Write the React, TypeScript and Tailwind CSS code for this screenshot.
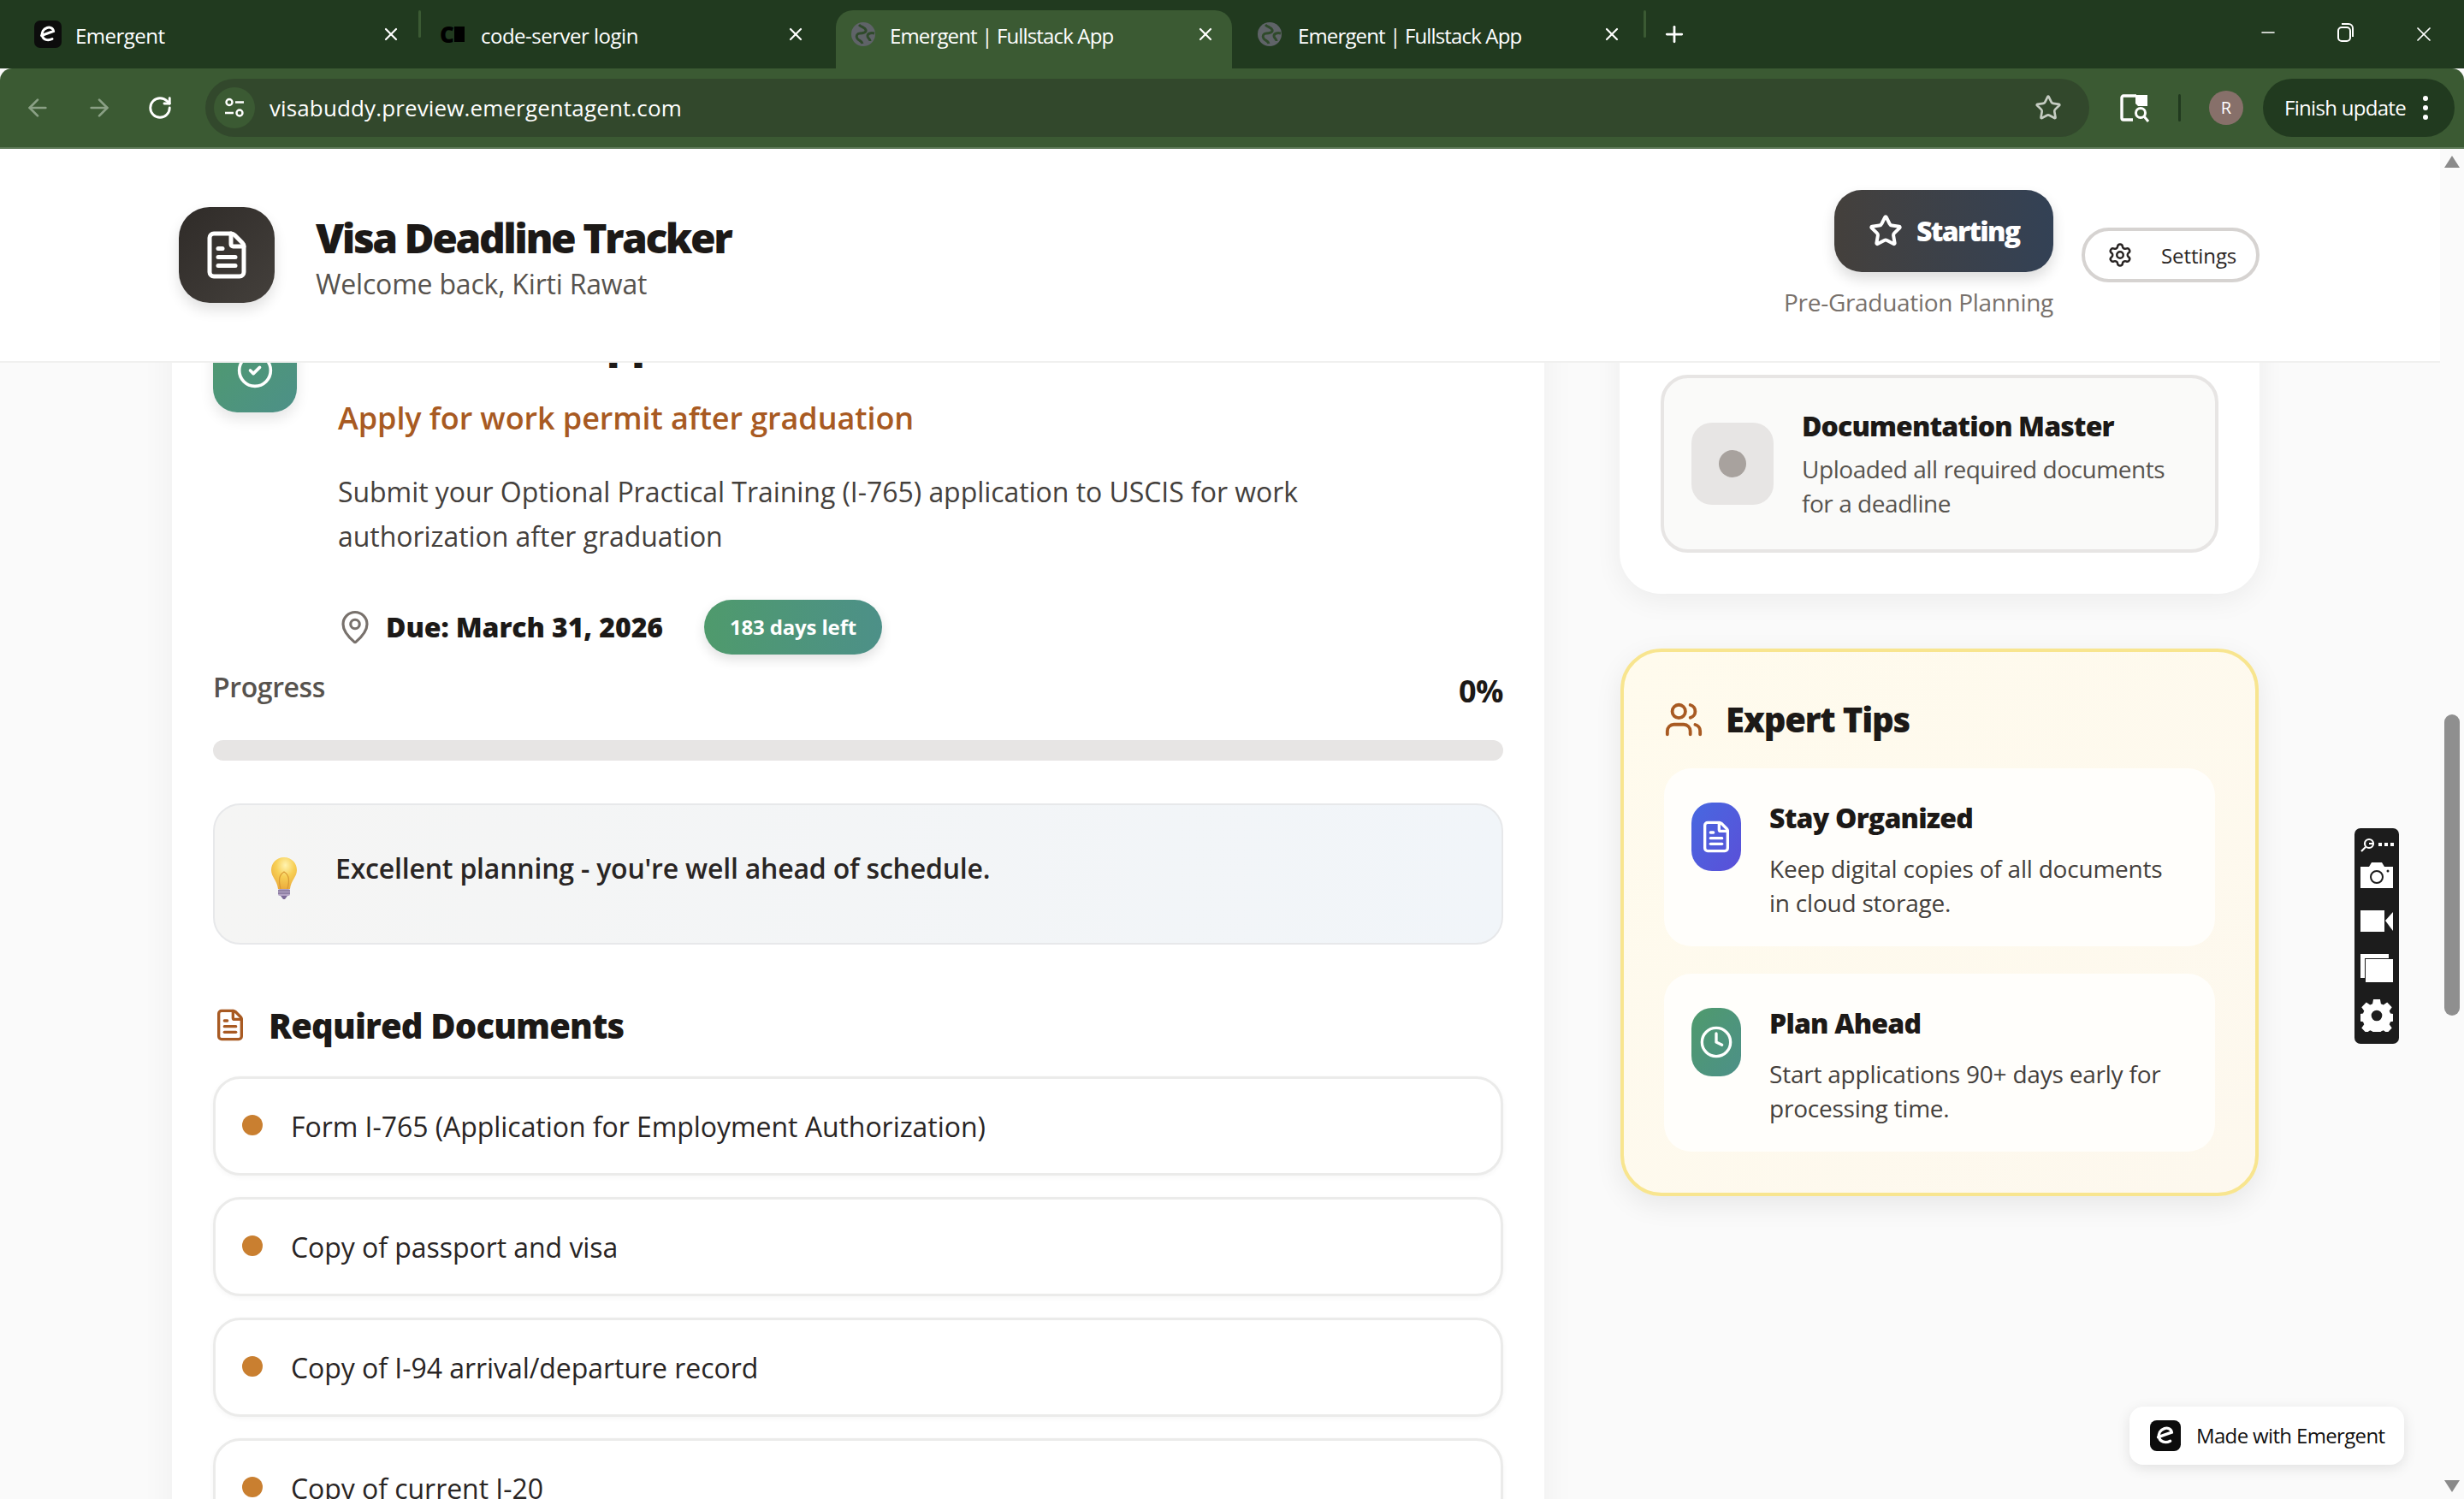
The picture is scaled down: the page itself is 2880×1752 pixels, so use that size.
import { ArrowLeft, ArrowRight, RotateCw, X, Plus, Minus, Star, Settings, FileText, CircleCheck, MapPin, Users, Clock } from "lucide-react";

const Globe = () => (
  <svg width="28" height="28" viewBox="0 0 28 28" className="shrink-0">
    <circle cx="14" cy="14" r="14" fill="#5f6368" />
    <path d="M9 3c3 3 7 3 8 6s-4 4-7 4-5 3-3 6 5 2 6 6" fill="none" stroke="#2f4a2b" strokeWidth="3" />
    <path d="M27 13c-4-1-8 0-8 3s3 3 3 6" fill="none" stroke="#2f4a2b" strokeWidth="3" />
  </svg>
);

const ELogo = ({ size }: { size: number }) => (
  <svg width={size} height={size} viewBox="0 0 32 32" className="shrink-0">
    <rect width="32" height="32" rx="7" fill="#0c0c0c" />
    <path d="M8.5 17.5 L22.5 12.5 C22 8.5 18 7.5 15 8.5 C10.5 10 8.5 14 9.5 18 C10.5 22.5 16 24 21 21.5" fill="none" stroke="#fff" strokeWidth="3" strokeLinecap="round" />
  </svg>
);

function Tab({ w, icon, title }: { w: string; icon: React.ReactNode; title: string }) {
  return (
    <div className={`${w} h-full flex items-center gap-4 pb-[12px] shrink-0 text-[24px] text-white`}>
      {icon}
      <span className="flex-1 truncate tracking-[-0.5px] leading-[32px] mt-[3px]">{title}</span>
      <X size={24} strokeWidth={2.2} className="shrink-0 text-white" />
    </div>
  );
}

const Sep = ({ c = "ml-[20px] mr-[22px]" }: { c?: string }) => <div className={`w-[3px] h-[32px] rounded bg-[#3b5a33] mb-[12px] shrink-0 ${c}`} />;

function TopBar() {
  return (
    <>
      <div className="h-[80px] bg-[#213a1f] flex items-stretch pt-[12px] pl-[40px] shrink-0">
        <Tab w="w-[429px]" icon={<ELogo size={32} />} title="Emergent" />
        <Sep />
        <Tab w="w-[428px]" icon={
          <div className="w-[32px] h-[32px] flex items-center gap-[1px] shrink-0 text-black font-black text-[26px] leading-none"><span className="tracking-[-1px]">C</span><span className="block w-[12px] h-[18px] bg-black" /></div>
        } title="code-server login" />
        <div className="w-[35px] shrink-0" />
        <div className="w-[463px] h-full bg-[#3b5a33] rounded-t-[20px] flex items-center gap-[17px] pl-[18px] pr-[19px] pb-[12px] text-[24px] text-white shrink-0">
          <Globe />
          <span className="flex-1 truncate tracking-[-0.85px] leading-[32px] mt-[3px]">Emergent | Fullstack App</span>
          <X size={24} strokeWidth={2.2} />
        </div>
        <div className="w-[30px] shrink-0" />
        <div className="w-[426px] h-full flex items-center gap-[19px] pb-[12px] text-[24px] text-white shrink-0">
          <Globe />
          <span className="flex-1 truncate tracking-[-0.85px] leading-[32px] mt-[3px]">Emergent | Fullstack App</span>
          <X size={24} strokeWidth={2.2} />
        </div>
        <Sep c="ml-[25px] mr-[18px]" />
        <div className="h-full flex items-center pb-[12px]"><Plus size={30} strokeWidth={2.2} className="text-white" /></div>
        <div className="ml-auto h-full flex items-start pr-[33px] pt-[14px] text-white">
          <Minus size={24} strokeWidth={1.6} className="mr-[66px]" />
          <svg width="24" height="24" viewBox="0 0 24 24" fill="none" stroke="#fff" strokeWidth="2" className="mr-[66px]">
            <rect x="4" y="6" width="14" height="16" rx="4" /><path d="M8 2h8a5 5 0 0 1 5 5v10" />
          </svg>
          <X size={28} strokeWidth={1.5} />
        </div>
      </div>
      <div className="h-[94px] bg-[#3b5a33] border-b-2 border-[#5e7a58] flex items-center pl-[28px] pr-[11px] rounded-t-[14px] shrink-0 relative">
        <ArrowLeft size={32} strokeWidth={2} className="text-[#8aa085]" />
        <ArrowRight size={32} strokeWidth={2} className="text-[#8aa085] ml-[40px]" />
        <RotateCw size={30} strokeWidth={2.3} className="text-white ml-[40px]" />
        <div className="ml-[38px] w-[2203px] h-[68px] rounded-full bg-[#32482c] flex items-center pl-[10px] pr-[32px]">
          <div className="w-[48px] h-[48px] rounded-full bg-[#3b5a33] flex items-center justify-center shrink-0">
            <svg width="26" height="26" viewBox="0 0 26 26" fill="none" stroke="#fff" strokeWidth="2.4">
              <circle cx="7" cy="6.5" r="3.5" /><path d="M14 6.5h10M2 19h10" /><circle cx="19" cy="19" r="3.5" />
            </svg>
          </div>
          <span className="ml-[17px] text-[26px] text-white tracking-[0.13px]">visabuddy.preview.emergentagent.com</span>
          <Star size={32} strokeWidth={2} className="ml-auto text-[#c5ccc2]" />
        </div>
        <svg width="36" height="36" viewBox="0 0 36 36" fill="none" className="ml-[35px] shrink-0">
          <path d="M20 4H5a2 2 0 0 0-2 2v24a2 2 0 0 0 2 2h11" stroke="#fff" strokeWidth="3.4" />
          <path d="M19 3h14v13H22l-3-3z" fill="#fff" />
          <circle cx="25" cy="24" r="5.5" stroke="#fff" strokeWidth="3" /><path d="M29 28l5 6" stroke="#fff" strokeWidth="3" />
        </svg>
        <div className="w-[3px] h-[32px] rounded bg-[#213a1f] ml-[33px] shrink-0" />
        <div className="w-[40px] h-[40px] rounded-full bg-[#87706a] text-white text-[20px] flex items-center justify-center ml-[33px] shrink-0">R</div>
        <div className="ml-[23px] w-[224px] h-[68px] rounded-full bg-[#213a1f] flex items-center pl-[25px] text-white text-[24px] shrink-0">
          <span className="tracking-[-0.7px]">Finish update</span>
          <div className="ml-[20px] flex flex-col gap-[5px]">
            <span className="block w-[6px] h-[6px] rounded-full bg-white" /><span className="block w-[6px] h-[6px] rounded-full bg-white" /><span className="block w-[6px] h-[6px] rounded-full bg-white" />
          </div>
        </div>
      </div>
    </>
  );
}

function DocRow({ text }: { text: string }) {
  return (
    <div className="h-[116px] shrink-0 rounded-[32px] border-[3px] border-[#ebebea] bg-white flex items-center pl-[31px] gap-[33px] shadow-[0_2px_6px_rgba(0,0,0,0.04)]">
      <span className="block w-[24px] h-[24px] rounded-full bg-[#c97f30] shrink-0 -mt-[2px]" />
      <span className="text-[32px] leading-[48px] text-[#292524] tracking-[-0.05px] mt-[1px]">{text}</span>
    </div>
  );
}

function Tip({ icon, grad, title, a, b }: { icon: React.ReactNode; grad: string; title: string; a: string; b: string }) {
  return (
    <div className="h-[208px] rounded-[32px] bg-[#fffefb] flex pl-[32px] pt-[40px]">
      <div className={`w-[58px] h-[80px] rounded-[24px] ${grad} flex items-center justify-center shrink-0`}>{icon}</div>
      <div className="ml-[33px] -mt-[2px]">
        <div className="text-[32px] leading-[40px] font-extrabold text-[#1c1917] tracking-[-0.8px]">{title}</div>
        <div className="mt-[19px] text-[28px] leading-[40px] text-[#44403c] tracking-[-0.22px]">{a}<br />{b}</div>
      </div>
    </div>
  );
}

function Header() {
  return (
    <div className="relative z-10 h-[250px] shrink-0 bg-white border-b-2 border-[#f0f0ef] flex items-start justify-between pl-[209px] pr-[211px]">
      <div className="flex items-start mt-[68px]">
        <div className="w-[112px] h-[112px] rounded-[36px] bg-gradient-to-br from-[#2f2b28] to-[#44403c] flex items-center justify-center shadow-[0_8px_16px_rgba(0,0,0,0.12)]">
          <FileText size={60} strokeWidth={2} className="text-white" />
        </div>
        <div className="ml-[48px] mt-[6px]">
          <div className="text-[48px] leading-[60px] font-extrabold text-[#1c1917] tracking-[-2.5px]">Visa Deadline Tracker</div>
          <div className="text-[32px] leading-[44px] mt-[2px] text-[#57534e] tracking-[-0.2px]">Welcome back, Kirti Rawat</div>
        </div>
      </div>
      <div className="flex items-start mt-[48px]">
        <div className="flex flex-col items-end">
          <div className="w-[256px] h-[96px] rounded-[32px] bg-gradient-to-r from-[#44403c] to-[#334155] flex items-center pl-[40px] gap-[16px] text-white text-[32px] font-extrabold tracking-[-1.7px] shadow-[0_8px_16px_rgba(0,0,0,0.14)]">
            <Star size={40} strokeWidth={2.4} />
            <span>Starting</span>
          </div>
          <div className="mt-[15px] text-[28px] leading-[40px] text-[#78716c] tracking-[-0.3px]">Pre-Graduation Planning</div>
        </div>
        <div className="ml-[33px] mt-[44px] w-[208px] h-[64px] rounded-full border-[4px] border-[#d6d3d1] bg-white flex items-center pl-[26px] gap-[33px] text-[24px] text-[#292524] tracking-[-0.1px]">
          <Settings size={30} strokeWidth={2} />
          <span className="mt-[2px]">Settings</span>
        </div>
      </div>
    </div>
  );
}

function MainCard() {
  return (
    <div className="w-[1604px] shrink-0 bg-white rounded-t-[48px] px-[48px] pt-[38px] shadow-[0_4px_40px_rgba(0,0,0,0.05)]">
      <div className="flex items-start">
        <div className="w-[98px] h-[96px] rounded-[28px] bg-gradient-to-br from-[#4f9a6c] to-[#4d9088] flex items-center justify-center shadow-[0_8px_16px_rgba(0,0,0,0.1)] mt-[18px] shrink-0">
          <CircleCheck size={44} strokeWidth={2} className="text-white -mt-[2px]" />
        </div>
        <div className="ml-[48px]">
          <div className="text-[48px] leading-[64px] font-extrabold text-[#1c1917] tracking-[-1.6px]">Submit OPT Application</div>
          <div className="mt-[33px] text-[36px] leading-[48px] font-semibold text-[#a85a22] tracking-[-0.08px]">Apply for work permit after graduation</div>
          <div className="mt-[36px] text-[32px] leading-[52px] text-[#44403c] tracking-[-0.05px]">Submit your Optional Practical Training (I-765) application to USCIS for work<br />authorization after graduation</div>
          <div className="mt-[48px] flex items-center h-[64px]">
            <MapPin size={42} strokeWidth={1.8} className="text-[#78716c] shrink-0 -ml-[1px]" />
            <span className="ml-[15px] text-[32px] font-extrabold text-[#1c1917] tracking-[-0.1px]">Due: March 31, 2026</span>
            <div className="ml-[48px] h-[64px] w-[208px] rounded-full bg-gradient-to-r from-[#4f9a6c] to-[#4d9088] flex items-center justify-center text-white text-[24px] font-bold tracking-[-0.15px] shadow-[0_6px_14px_rgba(0,0,0,0.12)]">183 days left</div>
          </div>
        </div>
      </div>
      <div className="flex justify-between items-start mt-[16px]">
        <span className="text-[32px] leading-[44px] font-semibold text-[#57534e] tracking-[-0.4px]">Progress</span>
        <span className="text-[36px] leading-[48px] font-bold text-[#1c1917] tracking-[-0.5px] mt-[3px]">0%</span>
      </div>
      <div className="mt-[33px] h-[24px] rounded-full bg-[#e7e5e4]" />
      <div className="mt-[50px] h-[165px] rounded-[32px] border-[2px] border-[#e7e8ea] bg-gradient-to-r from-[#f5f5f4] to-[#f1f5f9] flex items-center pl-[64px] gap-[43px]">
        <svg width="34" height="50" viewBox="0 0 34 50" className="shrink-0 mt-[8px]">
          <defs>
            <radialGradient id="bulb" cx="0.55" cy="0.25" r="0.8"><stop offset="0" stopColor="#fff3b0" /><stop offset="0.45" stopColor="#f7cf55" /><stop offset="1" stopColor="#eaa83a" /></radialGradient>
          </defs>
          <path d="M17 1C8 1 2 8 2 16c0 8 7 12 8 22h14c1-10 8-14 8-22C32 8 26 1 17 1z" fill="url(#bulb)" />
          <path d="M13 38c-2-8-3-16 4-20 7 4 6 12 4 20" fill="none" stroke="#d99a35" strokeWidth="1.2" />
          <rect x="10" y="38" width="14" height="8" rx="2" fill="#b3a3c4" />
          <path d="M10 40h14M10 43h14" stroke="#6f6085" strokeWidth="1" />
          <path d="M13 46h8l-3 4h-2z" fill="#7d6b98" />
        </svg>
        <span className="text-[32px] font-semibold text-[#292524] tracking-[-0.2px] -mt-[13px]">Excellent planning - you're well ahead of schedule.</span>
      </div>
      <div className="mt-[67px] flex items-center h-[56px]">
        <FileText size={40} strokeWidth={2} className="text-[#a85a22] shrink-0 -mt-[2px]" />
        <span className="ml-[25px] text-[40px] font-extrabold text-[#1c1917] tracking-[-0.85px]">Required Documents</span>
      </div>
      <div className="mt-[31px] flex flex-col gap-[25px]">
        <DocRow text="Form I-765 (Application for Employment Authorization)" />
        <DocRow text="Copy of passport and visa" />
        <DocRow text="Copy of I-94 arrival/departure record" />
        <DocRow text="Copy of current I-20" />
      </div>
    </div>
  );
}

function Side() {
  return (
    <div className="w-[748px] shrink-0 ml-[88px] flex flex-col">
      <div className="rounded-b-[48px] bg-white px-[48px] pt-[108px] pb-[48px] shadow-[0_8px_32px_rgba(0,0,0,0.06)]">
        <div className="h-[208px] rounded-[32px] border-[4px] border-[#e7e5e4] bg-[#fafaf9] flex items-center pl-[32px]">
          <div className="w-[96px] h-[96px] rounded-[24px] bg-[#e7e5e4] flex items-center justify-center shrink-0">
            <span className="block w-[32px] h-[32px] rounded-full bg-[#a8a29e]" />
          </div>
          <div className="ml-[33px] -mt-[1px]">
            <div className="text-[32px] leading-[44px] font-extrabold text-[#1c1917] tracking-[-0.9px]">Documentation Master</div>
            <div className="mt-[8px] text-[28px] leading-[40px] text-[#57534e] tracking-[-0.45px]">Uploaded all required documents<br />for a deadline</div>
          </div>
        </div>
      </div>
      <div className="mt-[64px] mx-[1px] h-[640px] rounded-[48px] border-[4px] border-[#f8e58f] bg-gradient-to-br from-[#fffbed] to-[#fdf8ee] px-[47px] pt-[55px] shadow-[0_10px_32px_rgba(0,0,0,0.08)]">
        <div className="flex items-center h-[48px]">
          <Users size={46} strokeWidth={2} className="text-[#a85a22] shrink-0" />
          <span className="ml-[26px] text-[40px] font-extrabold text-[#1c1917] tracking-[-1.2px]">Expert Tips</span>
        </div>
        <div className="mt-[33px] flex flex-col gap-[32px]">
          <Tip grad="bg-gradient-to-br from-[#4668e0] to-[#5a4fd8]" icon={<FileText size={40} strokeWidth={2} className="text-white" />} title="Stay Organized" a="Keep digital copies of all documents" b="in cloud storage." />
          <Tip grad="bg-gradient-to-br from-[#4f9a6c] to-[#4d9088]" icon={<Clock size={40} strokeWidth={2} className="text-white" />} title="Plan Ahead" a="Start applications 90+ days early for" b="processing time." />
        </div>
      </div>
    </div>
  );
}

function ScrollBar() {
  return (
    <div className="w-[28px] shrink-0 bg-[#fafafa] flex flex-col items-center relative z-20">
      <div className="mt-[8px] w-0 h-0 border-l-[9px] border-r-[9px] border-b-[14px] border-l-transparent border-r-transparent border-b-[#8a8a8a]" />
      <div className="mt-[639px] w-[18px] h-[352px] rounded-full bg-[#8f8f8f]" />
      <div className="mt-auto mb-[8px] w-0 h-0 border-l-[9px] border-r-[9px] border-t-[14px] border-l-transparent border-r-transparent border-t-[#8a8a8a]" />
    </div>
  );
}

export default function App() {
  return (
    <div className="w-[2880px] h-[1752px] overflow-hidden flex flex-col bg-[#fafafa] font-['Open_Sans',sans-serif]">
      <TopBar />
      <div className="relative flex-1 flex min-h-0 overflow-hidden">
        <div className="flex-1 min-w-0 flex flex-col">
          <Header />
          <div className="-mt-[94px] flex pl-[201px]">
            <MainCard />
            <Side />
          </div>
        </div>
        <ScrollBar />

        <div className="absolute left-[2752px] top-[794px] w-[52px] h-[252px] rounded-[7px] bg-[#1c1c1c] z-30 flex flex-col items-center pt-[10px]">
          <div className="flex items-center gap-[3px] h-[18px]">
            <svg width="18" height="18" viewBox="0 0 18 18" fill="none" stroke="#fff" strokeWidth="2.2"><circle cx="10" cy="8" r="5" /><path d="M6 12l-5 5M10 8h4" /></svg>
            <span className="block w-[4px] h-[4px] bg-white" /><span className="block w-[4px] h-[4px] bg-white" /><span className="block w-[4px] h-[4px] bg-white" />
          </div>
          <svg width="38" height="30" viewBox="0 0 38 30" className="mt-[12px]">
            <path d="M0 5h10l3-5h12l3 5h10v25H0z" fill="#fff" />
            <circle cx="19" cy="17" r="7" fill="#fff" stroke="#1c1c1c" strokeWidth="2" /><circle cx="32" cy="10" r="1.5" fill="#1c1c1c" />
          </svg>
          <svg width="38" height="26" viewBox="0 0 38 26" className="mt-[26px]">
            <rect width="28" height="25" fill="#fff" /><path d="M29 12L38 2v22z" fill="#fff" />
          </svg>
          <svg width="38" height="34" viewBox="0 0 38 34" className="mt-[25px]">
            <path d="M0 0h33v5H5v23H0z" fill="#fff" /><rect x="6" y="6" width="32" height="27" fill="#fff" />
          </svg>
          <svg width="38" height="38" viewBox="0 0 24 24" className="mt-[19px]">
            <path fill="#fff" fillRule="evenodd" d="M9.5 0h5l.6 3.3 1.8.8 2.8-1.9 3.5 3.6-1.9 2.7.8 1.9 3 .6v5l-3 .6-.8 1.9 1.9 2.7-3.5 3.6-2.8-1.9-1.8.8-.6 3.3h-5l-.6-3.3-1.8-.8-2.8 1.9-3.5-3.6 1.9-2.7-.8-1.9-3-.6v-5l3-.6.8-1.9-1.9-2.7 3.5-3.6 2.8 1.9 1.8-.8zM12 8a4 4 0 1 0 0 8 4 4 0 0 0 0-8z" />
          </svg>
        </div>

        <div className="absolute left-[2489px] top-[1470px] w-[321px] h-[68px] rounded-[16px] bg-white z-30 flex items-center pl-[24px] gap-[18px] text-[24px] text-[#111] shadow-[0_4px_16px_rgba(0,0,0,0.1)]">
          <ELogo size={36} />
          <span className="tracking-[-0.65px]">Made with Emergent</span>
        </div>
      </div>
    </div>
  );
}
